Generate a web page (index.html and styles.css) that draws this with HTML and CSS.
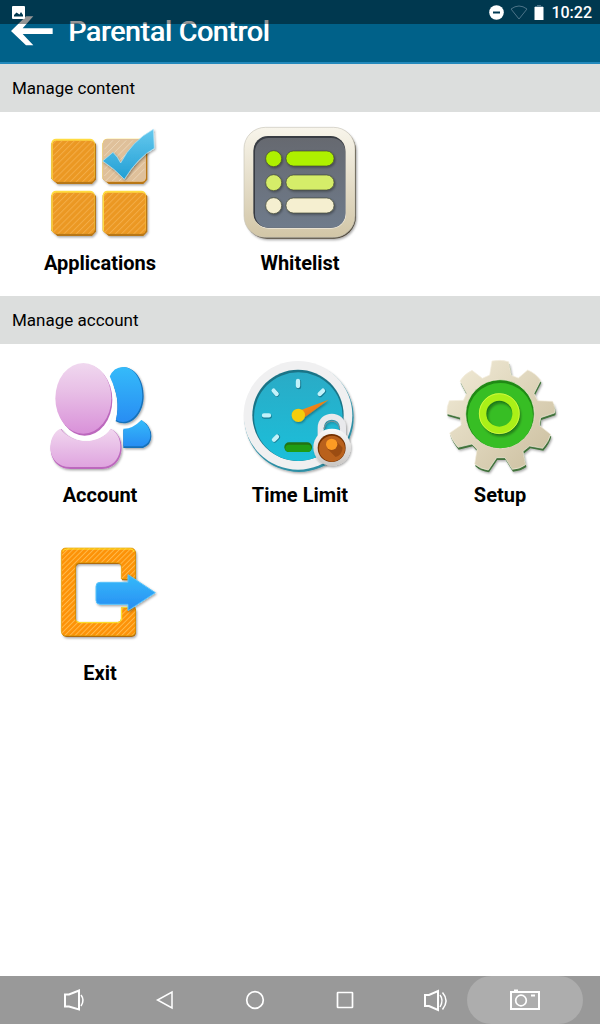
FILE: index.html
```html
<!DOCTYPE html>
<html lang="en">
<head>
<meta charset="UTF-8">
<meta name="viewport" content="width=device-width, initial-scale=1.0">
<title>Parental Control</title>
<link rel="stylesheet" href="styles.css">
</head>
<body>
  <!-- translucent system bar, sits over the header -->
  <div class="status-bar">
    <svg class="status-photo" width="13" height="13" viewBox="0 0 13 13"><path fill="#fff" fill-rule="evenodd" d="M1 0h11q1 0 1 1v11q0 1-1 1H1q-1 0-1-1V1q0-1 1-1zM2 10.500h9V9L9 6 7.500 8.500 4.500 6.500 2 9z"/></svg>
    <svg width="15" height="15" viewBox="0 0 15 15"><circle cx="7.500" cy="7.500" r="7.300" fill="#fff"/><path fill="#003953" d="M4 6.500h7v2H4z"/></svg>
    <svg class="status-wifi" width="18" height="15" viewBox="0 0 18 15"><path fill="none" stroke="#4d7488" d="M1 4Q9-2 17 4L9 14z"/></svg>
    <svg class="status-battery" width="10" height="15" viewBox="0 0 10 15"><path fill="#4d7488" d="M3 0h4v1h2v1H1V1h2z"/><path fill="#fff" d="M.5 2h9v13h-9z"/></svg>
    <span>10:22</span>
  </div>

  <header class="header">
    <button class="back" aria-label="Back">
      <svg width="42" height="30" viewBox="0 0 126 90"><path fill="#fff" d="M0 45 45 1h22L35 37h90v17H35l32 34H45z"/></svg>
    </button>
    <h1>Parental Control</h1>
  </header>

  <main>
    <h2>Manage content</h2>
    <div class="grid">
      <button class="tile">
        <svg width="120" height="120" viewBox="0 0 360 360">
          <defs>
            <pattern id="stripes" width="13" height="13" patternUnits="userSpaceOnUse" patternTransform="rotate(45)">
              <path fill="#f5b14e" d="M0 0h3v13H0z"/>
            </pattern>
            <filter id="shadow" x="-20%" y="-20%" width="150%" height="150%">
              <feDropShadow dx="3" dy="4" stdDeviation="3" flood-color="#000" flood-opacity=".35"/>
            </filter>
            <linearGradient id="check" x1="0" y1="0" x2="0" y2="1">
              <stop offset="0" stop-color="#64c8ee"/><stop offset="1" stop-color="#229fd4"/>
            </linearGradient>
            <g id="block">
              <path fill="#b87716" filter="url(#shadow)" d="M14 4h108l12 12v107l-12 13H18L0 120V14z"/>
              <rect width="130" height="128" rx="14" fill="#ffdc42"/>
              <rect x="4" y="6" width="125" height="123" rx="11" fill="#eb9823"/>
              <rect x="4" y="6" width="125" height="123" rx="11" fill="url(#stripes)" opacity=".8"/>
            </g>
          </defs>
          <use href="#block" x="34" y="56"/>
          <use href="#block" x="34" y="212"/>
          <use href="#block" x="188" y="212"/>
          <use href="#block" x="188" y="56"/>
          <rect x="189" y="57" width="129" height="128" rx="13" fill="#dfc09a"/>
          <g fill="none" stroke="#ecd6b8" stroke-width="3">
            <path d="m193 88 26-27M193 108l46-47M193 128l66-67M193 148l86-87M193 168l106-107M197 183 314 66M217 183l97-97M237 183l77-77M257 183l57-57M277 183l37-37"/>
          </g>
          <path fill="url(#check)" stroke="#b5e5f7" stroke-width="2" filter="url(#shadow)" d="M188 123 219 97q14 13 23 32 34-66 98-101l3 57q-48 25-90 93-28-31-65-55z"/>
        </svg>
        <span>Applications</span>
      </button>
      <button class="tile">
        <svg width="120" height="120" viewBox="15 0 360 360">
          <defs>
            <linearGradient id="frame" x1="0" y1="0" x2="0" y2="1">
              <stop offset="0" stop-color="#f8f5eb"/><stop offset="1" stop-color="#d2c6a7"/>
            </linearGradient>
            <linearGradient id="slate" x1="0" y1="0" x2="0" y2="1">
              <stop offset="0" stop-color="#666970"/><stop offset="1" stop-color="#6f7b8b"/>
            </linearGradient>
          </defs>
          <rect x="30" y="25" width="333" height="331" rx="66" fill="#50483a" filter="url(#shadow)"/>
          <rect x="27" y="22" width="333" height="330" rx="64" fill="url(#frame)" stroke="#c9c5ba" stroke-width="2"/>
          <rect x="56" y="50" width="277" height="276" rx="44" fill="#efe9db"/>
          <rect x="55" y="48" width="276" height="275" rx="44" fill="#383c43"/>
          <rect x="60" y="54" width="271" height="269" rx="41" fill="url(#slate)"/>
          <g filter="url(#shadow)" stroke="#3f4630" stroke-width="2">
            <g fill="#aef000"><circle cx="116" cy="116" r="24"/><rect x="153" y="93" width="144" height="45" rx="22"/></g>
            <g fill="#d5ed69"><circle cx="116" cy="188" r="24"/><rect x="153" y="165" width="144" height="45" rx="22"/></g>
            <g fill="#f5efd0"><circle cx="116" cy="257" r="24"/><rect x="153" y="234" width="144" height="45" rx="22"/></g>
          </g>
        </svg>
        <span>Whitelist</span>
      </button>
    </div>

    <h2>Manage account</h2>
    <div class="grid">
      <button class="tile">
        <svg width="120" height="120" viewBox="0 0 360 360">
          <defs>
            <linearGradient id="pink" x1="0" y1="0" x2="0" y2="1">
              <stop offset="0" stop-color="#f0d8ef"/><stop offset=".4" stop-color="#e8bfe6"/><stop offset="1" stop-color="#d991d9"/>
            </linearGradient>
            <linearGradient id="pink-body" x1="0" y1="0" x2="0" y2="1">
              <stop offset="0" stop-color="#f1d7ef"/><stop offset="1" stop-color="#dfa4df"/>
            </linearGradient>
            <linearGradient id="blue" x1="0" y1="0" x2="0" y2="1">
              <stop offset="0" stop-color="#35bbfa"/><stop offset="1" stop-color="#288df3"/>
            </linearGradient>
          </defs>
          <g filter="url(#shadow)" fill="#1471b9">
            <path d="M210 78q12-32 42-32c37 2 59 43 59 86 0 47-28 82-60 82q-14 0-24-6 17-69-17-130z"/>
            <path d="M250 234q28 2 55-29 29 18 29 48 0 26-25 35h-59z"/>
          </g>
          <path fill="url(#blue)" d="M208 76q12-31 42-31c36 2 57 43 57 85 0 46-28 80-58 80q-12 0-21-6 16-68-20-128z"/>
          <path fill="url(#blue)" d="M250 230q28 1 54-26 27 18 27 46 0 23-23 33h-58z"/>
          <g filter="url(#shadow)" fill="#bc68bd">
            <path d="M64 231c35 50 116 50 149 0 50 24 41 119-27 120H92c-75-1-74-100-28-120z"/>
            <ellipse cx="133" cy="143" rx="85" ry="109"/>
          </g>
          <path fill="url(#pink-body)" d="M61 230c39 50 118 49 151 0 47 24 37 115-27 115H91c-74 0-73-95-30-115z"/>
          <ellipse cx="133" cy="143" rx="93" ry="122" fill="#fff"/>
          <ellipse cx="134" cy="144" rx="83" ry="107" fill="#bc68bd"/>
          <ellipse cx="130" cy="139" rx="84" ry="106" fill="url(#pink)"/>
        </svg>
        <span>Account</span>
      </button>
      <button class="tile">
        <svg width="120" height="120" viewBox="15 0 360 360">
          <defs>
            <linearGradient id="dial" x1="0" y1="0" x2="0" y2="1">
              <stop offset="0" stop-color="#2aabc6"/><stop offset="1" stop-color="#1bbfda"/>
            </linearGradient>
            <linearGradient id="needle" x1="0" y1="0" x2="1" y2="1">
              <stop offset="0" stop-color="#ffa329"/><stop offset="1" stop-color="#d95c00"/>
            </linearGradient>
            <linearGradient id="steel" x1="0" y1="0" x2="0" y2="1">
              <stop offset="0" stop-color="#fafafa"/><stop offset="1" stop-color="#c9c6c3"/>
            </linearGradient>
          </defs>
          <circle cx="192" cy="196" r="164" fill="#2d8fa5" filter="url(#shadow)"/>
          <circle cx="189" cy="190" r="163" fill="#f0f0f1"/>
          <circle cx="189" cy="190" r="137" fill="#1a7487"/>
          <circle cx="190" cy="194" r="133" fill="url(#dial)"/>
          <g stroke-linecap="round" stroke-width="15" fill="none">
            <path stroke="#167b93" d="M191 90v14M118 118l8 9M266 118l-10 10M88 193h15M128 255l-9 9"/>
            <path stroke="#c2f2fa" stroke-width="13" d="M189 87v15M116 116l9 10M264 116l-10 10M87 190h15M126 254l-9 9"/>
          </g>
          <rect x="148" y="271" width="83" height="29" rx="14" fill="#227213"/>
          <rect x="151" y="278" width="78" height="22" rx="11" fill="#209d15"/>
          <g filter="url(#shadow)">
            <path fill="url(#needle)" d="m182 180 99-37-82 60z"/>
            <circle cx="190" cy="190" r="20" fill="#f4cd08"/>
          </g>
          <g filter="url(#shadow)">
            <path fill="none" stroke="#e9e9ec" stroke-width="18" d="M257 252v-24c0-45 67-45 67 0v24"/>
            <path fill="none" stroke="#8c8c90" stroke-width="3" d="M267 231c3-31 44-31 47 0"/>
            <circle cx="291" cy="286" r="56" fill="url(#steel)"/>
          </g>
          <circle cx="290" cy="288" r="42" fill="#743100"/>
          <circle cx="291" cy="290" r="39" fill="#b9611c"/>
          <path fill="#9b4c12" d="m277 290 26-23 20 20q-2 22-21 28z"/>
          <circle cx="290" cy="277" r="17" fill="#fc9b24"/>
        </svg>
        <span>Time Limit</span>
      </button>
      <button class="tile">
        <svg width="120" height="120" viewBox="15 0 360 360">
          <defs>
            <linearGradient id="gear" x1="0" y1="0" x2="1" y2="1">
              <stop offset="0" stop-color="#f2ecd8"/><stop offset="1" stop-color="#cabd9d"/>
            </linearGradient>
            <path id="cog" d="M171 27q27-5 50 2l8 41 21 8 28-24q23 9 39 31l-20 39 11 22 45 2q10 23 6 35l-42 14-4 23 34 27q-6 22-24 42l-39-7-20 16 8 40q-16 12-40 14l-22-35h-25l-25 37q-25-3-41-18l7-44-15-16-42 10q-19-22-25-43l35-24-3-23-40-11q-2-20 7-39l42-1 10-21-20-37q14-22 36-32l31 24 22-10z"/>
          </defs>
          <use href="#cog" x="2" y="7" fill="#42733c" filter="url(#shadow)"/>
          <use href="#cog" fill="url(#gear)" stroke="#f4efdf" stroke-width="2"/>
          <circle cx="195" cy="186" r="103" fill="#208915" stroke="#eee8d5" stroke-width="2"/>
          <circle cx="196" cy="191" r="98" fill="#37be24"/>
          <circle cx="195" cy="189" r="49" fill="none" stroke="#1d791c" stroke-width="22" filter="url(#shadow)"/>
          <circle cx="193" cy="185" r="50" fill="none" stroke="#aaf018" stroke-width="22"/>
          <circle cx="193" cy="185" r="60" fill="none" stroke="#e2ff50" stroke-width="2"/>
        </svg>
        <span>Setup</span>
      </button>
      <button class="tile">
        <svg width="120" height="120" viewBox="0 -15 360 360">
          <defs>
            <pattern id="door-stripes" width="11" height="11" patternUnits="userSpaceOnUse" patternTransform="rotate(45)">
              <path fill="#ffb94a" d="M0 0h3v11H0z"/>
            </pattern>
            <path id="door" fill-rule="evenodd" d="M78 39h194q14 0 14 14v79h-42V95q0-12-12-12H118q-12 0-12 12v155q0 12 12 12h114q12 0 12-12v-32h42v70q0 14-14 14H78q-14 0-14-14V53q0-14 14-14z"/>
          </defs>
          <use href="#door" x="2" y="4" fill="#ae6508" filter="url(#shadow)"/>
          <use href="#door" fill="#fd9207"/>
          <use href="#door" fill="url(#door-stripes)" stroke="#dda004" stroke-width="2"/>
          <path fill="none" stroke="#ffe62c" stroke-width="3" d="M69 50q2-8 12-8h190q10 0 11 9M109 257q3 6 10 6h111q15 0 15-14v-32h20"/>
          <path fill="url(#blue)" stroke="#58c3fa" stroke-width="3" filter="url(#shadow)" d="M180 142h84v-23l82 54-82 54v-19h-84q-12 0-12-12v-42q0-12 12-12z"/>
        </svg>
        <span>Exit</span>
      </button>
    </div>
  </main>

  <nav class="nav-bar">
    <button aria-label="Volume down">
      <svg width="24" height="24" viewBox="0 0 24 24"><path stroke-width="2" d="M2 6.500v12h4l10 3v-19l-10 4z"/><path stroke-width="1.500" d="M18 7q4 5 0 11"/></svg>
    </button>
    <button aria-label="Back">
      <svg width="24" height="24" viewBox="0 0 24 24"><path stroke-width="1.500" d="M19 4v16L4.500 12z"/></svg>
    </button>
    <button aria-label="Home">
      <svg width="24" height="24" viewBox="0 0 24 24"><circle cx="12" cy="12" r="8.300" stroke-width="1.700"/></svg>
    </button>
    <button aria-label="Recent apps">
      <svg width="24" height="24" viewBox="0 0 24 24"><rect x="4.500" y="4.500" width="15" height="15" rx=".5" stroke-width="1.700"/></svg>
    </button>
    <button aria-label="Volume up">
      <svg width="24" height="24" viewBox="0 0 24 24"><path stroke-width="2" d="M2 7v11h4l9 4V3L6 7z"/><path stroke-width="1.500" d="M17 7q4 5 0 12M19.500 4.500q7 8 0 17"/></svg>
    </button>
    <button class="active" aria-label="Screenshot">
      <svg width="30" height="24" viewBox="0 0 30 24"><path stroke-width="2" d="M1 4h28v17H1z"/><circle cx="11" cy="12.500" r="5.300" stroke-width="1.700"/><path stroke-width="2" d="M4 2.500h4M21 7.500h4"/></svg>
    </button>
  </nav>
</body>
</html>
```
FILE: styles.css
```css
* {
  box-sizing: border-box;
}

body {
  margin: 0;
  min-height: 100vh;
  display: flex;
  flex-direction: column;
  background: #fff;
  color: #000;
  font-family: Roboto, "Liberation Sans", sans-serif;
}

button {
  border: 0;
  padding: 0;
  background: none;
  color: inherit;
  font: inherit;
  cursor: pointer;
}

svg {
  display: block;
  overflow: visible;
}

.status-bar { /* Overlaps the header */
  position: absolute;
  top: 0;
  left: 0;
  right: 0;
  height: 24px;
  padding: 0 8px 0 12px;
  display: flex;
  align-items: center;
  background: rgba(0, 0, 0, 0.42);
  color: #fff;
  font-size: 16px;
  font-weight: 500;
}

.status-photo {
  margin-right: auto;
}

.status-wifi {
  margin: 0 6px;
}

.status-battery {
  margin-right: 7px;
}

.header {
  height: 64px;
  padding: 0 11px;
  display: flex;
  align-items: center;
  gap: 15px;
  background: #006189;
  border-bottom: 2px solid #2389bb;
  color: #fff;
}

.header h1 {
  margin: 0;
  font-size: 28px;
  font-weight: 400;
  text-shadow: 1px 0 #fff;
}

main {
  flex: 1;
}

main h2 {
  margin: 0;
  padding: 0 12px;
  background: #dcdedd;
  font-size: 17px;
  font-weight: 400;
  line-height: 48px;
}

.grid {
  display: grid;
  grid-template-columns: repeat(3, 1fr);
  padding-bottom: 6px;
}

.tile {
  display: flex;
  flex-direction: column;
  align-items: center;
  gap: 11px;
  padding: 8px 0 15px;
  font-size: 20px;
  font-weight: 700;
  line-height: 24px;
}

.nav-bar {
  display: flex;
  height: 48px;
  padding: 0 30px;
  background: #999;
}

.nav-bar button {
  flex: 1;
  display: flex;
  align-items: center;
  justify-content: center;
}

.nav-bar svg {
  fill: none;
  stroke: #fff;
}

.nav-bar .active { /* Pressed highlight is wider than the button */
  margin: 0 -13px;
  padding: 0 13px;
  flex: 1 1 26px;
  border-radius: 24px;
  background: #adadad;
}
```
